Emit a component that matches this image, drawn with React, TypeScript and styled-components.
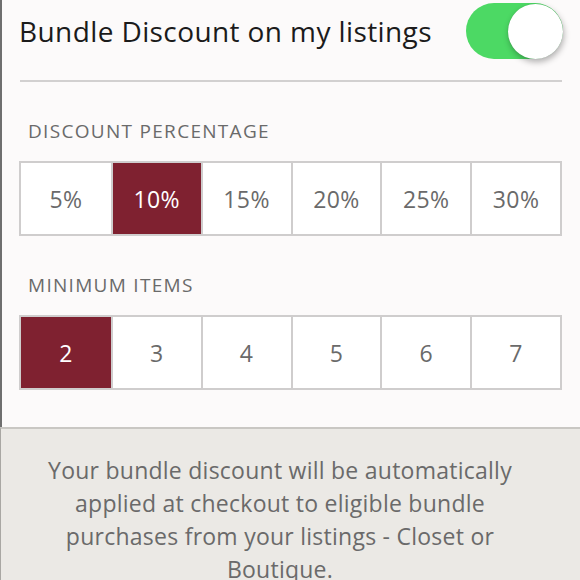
import styled, { createGlobalStyle } from "styled-components";

const percentages = [5, 10, 15, 20, 25, 30];
const minimumItems = [2, 3, 4, 5, 6, 7];

const GlobalStyle = createGlobalStyle`
  html, body {
    margin: 0;
    padding: 0;
    background: #fcfafa;
  }
  body {
    font-family: "Open Sans", "Lato", sans-serif;
    -webkit-font-smoothing: antialiased;
  }
`;

const App = () => {
  return (
    <Page>
      <GlobalStyle />
      <Settings>
        <Header>
          <Title>Bundle Discount on my listings</Title>
          <Switch $on>
            <Knob />
          </Switch>
        </Header>
        <Divider />

        <SectionLabel>Discount Percentage</SectionLabel>
        <Options>
          {percentages.map((value) => (
            <Option key={value} $selected={value === 10}>
              {value}%
            </Option>
          ))}
        </Options>

        <SectionLabel>Minimum Items</SectionLabel>
        <Options>
          {minimumItems.map((value) => (
            <Option key={value} $selected={value === 2}>
              {value}
            </Option>
          ))}
        </Options>
      </Settings>

      <Note>
        <NoteText>
          Your bundle discount will be automatically applied at checkout to
          eligible bundle purchases from your listings - Closet or Boutique.
        </NoteText>
      </Note>
    </Page>
  );
};

export default App;

const Page = styled.div`
  width: 580px;
  height: 580px;
  overflow: hidden;
  display: flex;
  flex-direction: column;
`;

const Settings = styled.div`
  height: 427px;
  flex-shrink: 0;
  box-sizing: border-box;
  background: #fcfafa;
  border-left: 2px solid #6f6f6f;
  padding: 0 18px 0 16px;
  display: flex;
  flex-direction: column;
`;

const Header = styled.div`
  height: 62px;
  display: flex;
  align-items: center;
  justify-content: space-between;
  padding-left: 1px;
`;

const Title = styled.div`
  font-size: 28px;
  letter-spacing: 0.4px;
  color: #1b1b1b;
`;

const Switch = styled.div<{ $on?: boolean }>`
  width: 97px;
  height: 56px;
  border-radius: 28px;
  box-sizing: border-box;
  background: ${(p) => (p.$on ? "#4cd964" : "#e5e5e5")};
  display: flex;
  align-items: center;
  justify-content: ${(p) => (p.$on ? "flex-end" : "flex-start")};
  padding: 1px 0 1px 1px;
  margin-right: -1px;
`;

const Knob = styled.div`
  width: 55px;
  height: 55px;
  border-radius: 50%;
  background: #ffffff;
  box-shadow: 1px 3px 6px rgba(0, 0, 0, 0.3), 0 0 1px rgba(0, 0, 0, 0.2);
`;

const Divider = styled.div`
  height: 2px;
  background: #d2d0d0;
  margin: 18px 0 0 2px;
`;

const SectionLabel = styled.div`
  font-size: 19px;
  letter-spacing: 1.3px;
  line-height: 24px;
  text-transform: uppercase;
  color: #6a6a6a;
  margin: 37px 0 0 10px;
`;

const Options = styled.div`
  display: grid;
  grid-template-columns: repeat(6, 1fr);
  height: 75px;
  margin: 18px 0 0 1px;
  border: 2px solid #cfcdcd;
  box-sizing: border-box;
  background: #ffffff;
`;

const Option = styled.div<{ $selected?: boolean }>`
  display: flex;
  align-items: center;
  justify-content: center;
  font-size: 23px;
  letter-spacing: 0.4px;
  color: ${(p) => (p.$selected ? "#ffffff" : "#6a6a6a")};
  background: ${(p) => (p.$selected ? "#7f2130" : "transparent")};
  & + & {
    border-left: 2px solid #cfcdcd;
  }
`;

const Note = styled.div`
  flex: 1;
  background: #ebe9e5;
  border-top: 2px solid #c9c7c3;
  border-left: 1px solid #a9a7a3;
  display: flex;
  justify-content: center;
  padding: 25px 21px 0 0;
`;

const NoteText = styled.div`
  width: 500px;
  font-size: 23px;
  letter-spacing: 0.25px;
  line-height: 33px;
  color: #6a6a6a;
  text-align: center;
`;
